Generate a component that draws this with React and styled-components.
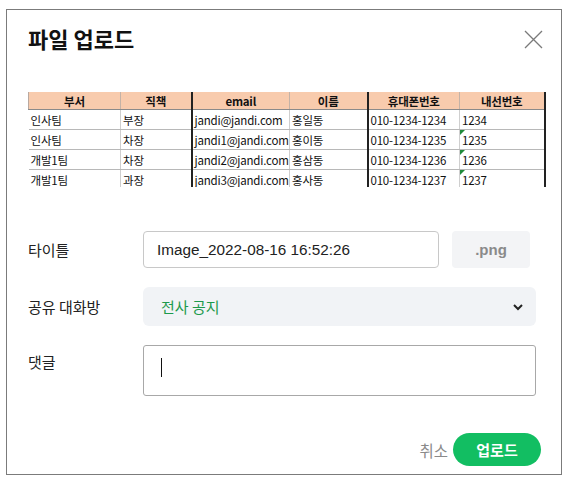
import React from "react";
import styled, { createGlobalStyle } from "styled-components";

const GlobalStyle = createGlobalStyle`
  body {
    margin: 0;
    background: #ffffff;
    font-family: "Noto Sans CJK KR", "Noto Sans", sans-serif;
  }
`;

const columns = [
  { title: "부서", width: 92 },
  { title: "직책", width: 71, thick: true },
  { title: "email", width: 98 },
  { title: "이름", width: 78, thick: true },
  { title: "휴대폰번호", width: 92 },
  { title: "내선번호", width: 85, thick: true },
];

const rows = [
  ["인사팀", "부장", "jandi@jandi.com", "홍일동", "010-1234-1234", "1234"],
  ["인사팀", "차장", "jandi1@jandi.com", "홍이동", "010-1234-1235", "1235"],
  ["개발1팀", "차장", "jandi2@jandi.com", "홍삼동", "010-1234-1236", "1236"],
  ["개발1팀", "과장", "jandi3@jandi.com", "홍사동", "010-1234-1237", "1237"],
];

const App = () => {
  return (
    <>
      <GlobalStyle />
      <Dialog>
        <Header>
          <Title>파일 업로드</Title>
          <CloseButton aria-label="닫기">
            <svg width="19" height="19" viewBox="0 0 19 19">
              <path d="M1 1L18 18M18 1L1 18" stroke="#7a7a7a" strokeWidth="1.3" fill="none" />
            </svg>
          </CloseButton>
        </Header>

        <Preview>
          <Sheet>
            <colgroup>
              {columns.map((c) => (
                <col key={c.title} style={{ width: c.width }} />
              ))}
            </colgroup>
            <thead>
              <tr>
                {columns.map((c) => (
                  <HeadCell key={c.title} $thick={c.thick}>
                    {c.title}
                  </HeadCell>
                ))}
              </tr>
            </thead>
            <tbody>
              {rows.map((row, r) => (
                <tr key={r}>
                  {row.map((value, i) => (
                    <Cell key={i} $thick={columns[i].thick} $flag={i === 5 && r > 0}>
                      {value}
                    </Cell>
                  ))}
                </tr>
              ))}
            </tbody>
          </Sheet>
        </Preview>

        <Form>
          <Row>
            <Label>타이틀</Label>
            <TitleInput defaultValue="Image_2022-08-16 16:52:26" />
            <Extension>.png</Extension>
          </Row>
          <Row>
            <Label>공유 대화방</Label>
            <Select>
              <span>전사 공지</span>
              <svg width="12" height="8" viewBox="0 0 12 8">
                <path d="M2 2L6 6L10 2" stroke="#222" strokeWidth="2" fill="none" />
              </svg>
            </Select>
          </Row>
          <Row $top>
            <Label $pad>댓글</Label>
            <Comment>
              <Caret />
            </Comment>
          </Row>
        </Form>

        <Footer>
          <CancelButton>취소</CancelButton>
          <UploadButton>업로드</UploadButton>
        </Footer>
      </Dialog>
    </>
  );
};

const Dialog = styled.div`
  margin: 9px 0 0 6px;
  width: 556px;
  height: 466px;
  box-sizing: border-box;
  border: 1px solid #7b7b7b;
  background: #ffffff;
  display: flex;
  flex-direction: column;
`;

const Header = styled.div`
  display: flex;
  justify-content: space-between;
  align-items: center;
  padding: 14px 18px 0 21px;
`;

const Title = styled.h1`
  margin: 0;
  font-size: 22px;
  line-height: 28px;
  font-weight: 700;
  color: #111;
`;

const CloseButton = styled.button`
  border: none;
  background: none;
  padding: 0;
  margin-top: 3px;
  width: 19px;
  height: 19px;
  display: flex;
`;

const Preview = styled.div`
  margin: 40px 0 0 21px;
  height: 95px;
  overflow: hidden;
`;

const Sheet = styled.table`
  border-collapse: collapse;
  table-layout: fixed;
  font-family: "Noto Sans CJK KR", sans-serif;
  font-size: 11.5px;
  letter-spacing: -0.2px;
  color: #111;
`;

const HeadCell = styled.th`
  height: 17px;
  padding: 0;
  background: #f8cbad;
  font-weight: 700;
  line-height: 16px;
  text-align: center;
  border-left: 1px solid #b9a9a0;
  border-right: ${({ $thick }) => ($thick ? "2px solid #222" : "1px solid #c4b2a6")};
  border-bottom: 1px solid #8a8a8a;
`;

const Cell = styled.td`
  position: relative;
  height: 19px;
  padding: 0 0 0 2px;
  line-height: 18px;
  white-space: nowrap;
  overflow: hidden;
  border-right: ${({ $thick }) => ($thick ? "2px solid #222" : "1px solid #cfcfcf")};
  border-bottom: 1px solid #b8b8b8;

  &::before {
    content: "";
    display: ${({ $flag }) => ($flag ? "block" : "none")};
    position: absolute;
    left: 0;
    top: 0;
    border-top: 5px solid #1f8a3a;
    border-right: 5px solid transparent;
  }
`;

const Form = styled.div`
  margin-top: 44px;
  padding: 0 25px 0 21px;
  display: flex;
  flex-direction: column;
  gap: 19px;
`;

const Row = styled.div`
  display: flex;
  align-items: ${({ $top }) => ($top ? "flex-start" : "center")};
`;

const Label = styled.div`
  width: 115px;
  flex-shrink: 0;
  font-size: 15px;
  color: #222;
  padding-top: ${({ $pad }) => ($pad ? "6px" : "0")};
`;

const TitleInput = styled.input`
  width: 296px;
  height: 37px;
  box-sizing: border-box;
  border: 1px solid #c8c8c8;
  border-radius: 4px;
  padding: 0 13px;
  font-family: "Liberation Sans", Arial, sans-serif;
  font-size: 15.3px;
  color: #222;
  outline: none;
`;

const Extension = styled.div`
  margin-left: 13px;
  width: 78px;
  height: 37px;
  border-radius: 4px;
  background: #f3f4f6;
  display: flex;
  align-items: center;
  justify-content: center;
  font-family: "Liberation Sans", Arial, sans-serif;
  font-weight: 700;
  font-size: 15px;
  color: #8a8a8a;
`;

const Select = styled.div`
  flex: 1;
  height: 39px;
  border-radius: 6px;
  background: #f1f3f6;
  display: flex;
  align-items: center;
  justify-content: space-between;
  padding: 0 12px 0 18px;
  font-size: 15px;
  color: #1d9a4c;
`;

const Comment = styled.div`
  flex: 1;
  height: 51px;
  box-sizing: border-box;
  border: 1px solid #a8a8a8;
  border-radius: 3px;
  padding: 12px 0 0 17px;
`;

const Caret = styled.div`
  width: 1px;
  height: 19px;
  background: #111;
`;

const Footer = styled.div`
  margin-top: auto;
  padding: 0 20px 8px 0;
  display: flex;
  justify-content: flex-end;
  align-items: center;
`;

const CancelButton = styled.button`
  border: none;
  background: none;
  padding: 0 5px 0 0;
  font-family: "Noto Sans CJK KR", sans-serif;
  font-size: 15.5px;
  color: #8a8a8a;
`;

const UploadButton = styled.button`
  border: none;
  border-radius: 17px;
  background: #12be62;
  width: 88px;
  height: 33px;
  font-family: "Noto Sans CJK KR", sans-serif;
  font-weight: 700;
  font-size: 15px;
  color: #ffffff;
`;

export default App;
